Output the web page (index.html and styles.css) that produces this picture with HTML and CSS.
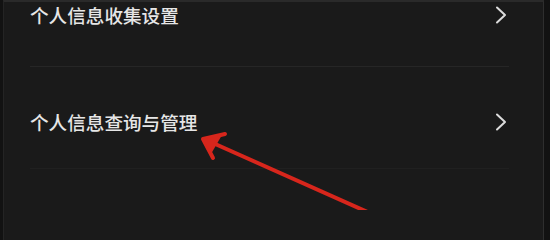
FILE: index.html
```html
<!DOCTYPE html>
<html lang="zh-CN">
<head>
<meta charset="utf-8">
<title>个人信息</title>
<link rel="stylesheet" href="styles.css">
</head>
<body>
<div class="screen">
  <ul class="menu">
    <li class="menu-item menu-item--first">
      <span class="label">个人信息收集设置</span>
      <svg class="chevron" viewBox="0 0 12 18" width="12" height="18"><path d="M2 1.5 L10 9 L2 16.5" fill="none" stroke="#dcdcdc" stroke-width="2" stroke-linecap="round" stroke-linejoin="round"/></svg>
    </li>
    <li class="menu-item menu-item--faint">
      <span class="label">个人信息查询与管理</span>
      <svg class="chevron" viewBox="0 0 12 18" width="12" height="18"><path d="M2 1.5 L10 9 L2 16.5" fill="none" stroke="#dcdcdc" stroke-width="2" stroke-linecap="round" stroke-linejoin="round"/></svg>
    </li>
  </ul>
  <svg class="annotation" viewBox="0 0 550 210" width="550" height="210">
    <g fill="none" stroke="#d7261c" stroke-width="4" stroke-linecap="round" stroke-linejoin="round">
      <line x1="204" y1="139" x2="372" y2="214"/>
      <polyline points="225,134 203,139 213,158"/>
    </g>
    <polygon points="203,139 222,135 211,154" fill="#d7261c"/>
  </svg>
</div>
</body>
</html>
```

FILE: styles.css
```css
html, body {
  margin: 0;
  padding: 0;
  background: #121212;
}
body {
  width: 550px;
  overflow: hidden;
  font-family: "Noto Sans CJK SC", "Noto Sans", sans-serif;
}
.screen {
  position: relative;
  margin-left: 3px;
  width: 541px;
  min-height: 100vh;
  box-sizing: border-box;
  background: #1a1a1a;
  border-top: 2px solid #2a2a2a;
  border-left: 1px solid #242424;
  border-right: 1px solid #2e2e2e;
}
.menu {
  list-style: none;
  margin: 0;
  padding: 0;
}
.menu-item {
  display: flex;
  align-items: center;
  justify-content: space-between;
  margin: 0 34px 0 26px;
  padding: 43px 2px 34px 0;
  border-bottom: 1px solid #262626;
  line-height: 24px;
}
.menu-item--first {
  padding-top: 1px;
  padding-bottom: 39px;
}
.menu-item--faint {
  border-bottom-color: #202020;
}
.label {
  color: #e6e6e6;
  font-size: 18.6px;
  font-weight: 500;
}
.chevron {
  display: block;
}
.annotation {
  position: absolute;
  left: -4px;
  top: -2px;
}
```
